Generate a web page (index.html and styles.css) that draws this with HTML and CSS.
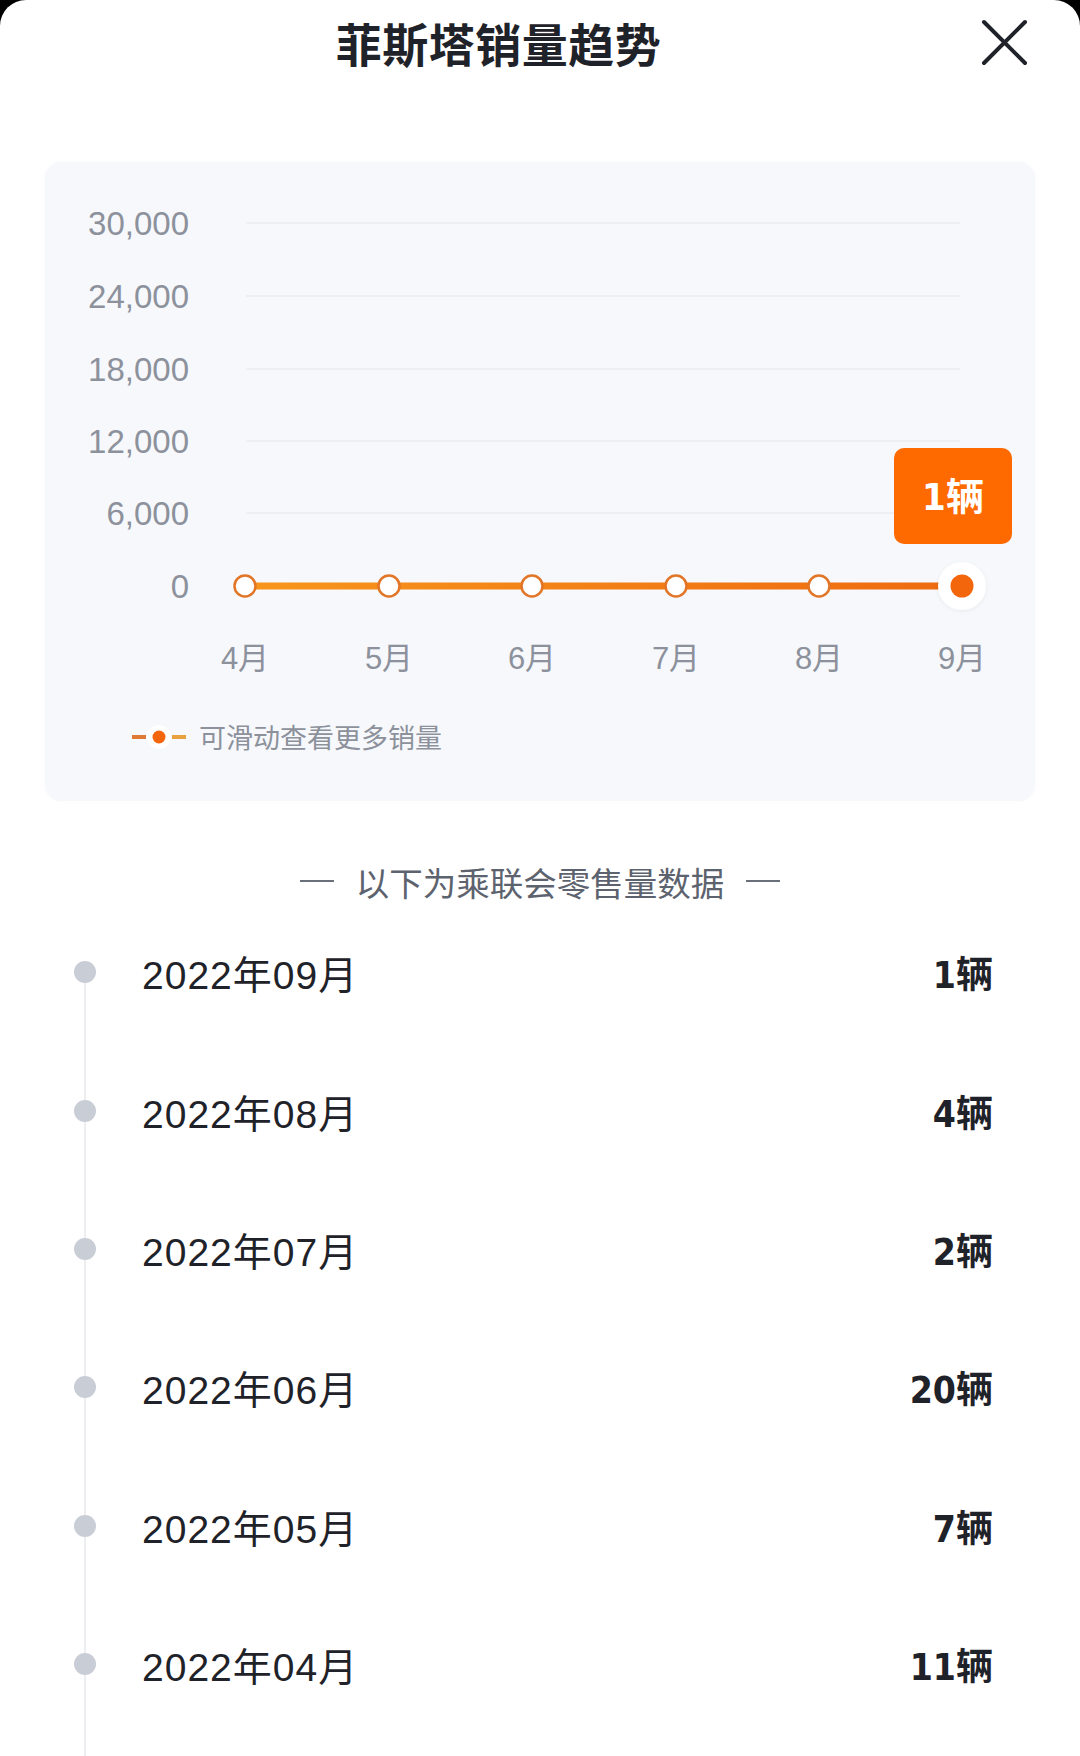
FILE: index.html
```html
<!DOCTYPE html>
<html lang="zh-CN">
<head>
<meta charset="utf-8">
<title>菲斯塔销量趋势</title>
<link rel="stylesheet" href="styles.css">
</head>
<body>
<div class="sheet">
  <header class="header">
    <h1 class="title">菲斯塔销量趋势</h1>
    <button class="close" aria-label="关闭">
      <svg width="47" height="47" viewBox="0 0 47 47"><path d="M3 3 L44 44 M44 3 L3 44" stroke="#1f2329" stroke-width="4" stroke-linecap="round" fill="none"/></svg>
    </button>
  </header>

  <section class="card">
    <svg class="chart" width="990" height="530" viewBox="0 0 990 530">
      <defs>
        <linearGradient id="lg" gradientUnits="userSpaceOnUse" x1="200" y1="0" x2="917" y2="0">
          <stop offset="0" stop-color="#f7961c"/>
          <stop offset="1" stop-color="#ee6a10"/>
        </linearGradient>
        <filter id="halo" x="-50%" y="-50%" width="200%" height="200%">
          <feDropShadow dx="0" dy="1" stdDeviation="2" flood-color="#000" flood-opacity="0.06"/>
        </filter>
      </defs>
      <g class="grid" stroke="#eaecf0" stroke-width="1.5">
        <line x1="201" y1="61" x2="915" y2="61"/>
        <line x1="201" y1="134" x2="915" y2="134"/>
        <line x1="201" y1="207" x2="915" y2="207"/>
        <line x1="201" y1="279" x2="915" y2="279"/>
        <line x1="201" y1="351" x2="915" y2="351"/>
      </g>
      <g class="ylab" text-anchor="end">
        <text x="144" y="73">30,000</text>
        <text x="144" y="146">24,000</text>
        <text x="144" y="219">18,000</text>
        <text x="144" y="291">12,000</text>
        <text x="144" y="363">6,000</text>
        <text x="144" y="436">0</text>
      </g>
      <rect x="200" y="420.5" width="717" height="7" fill="url(#lg)"/>
      <g fill="#fff" stroke="#e27526" stroke-width="2.5">
        <circle cx="200" cy="424" r="10.5"/>
        <circle cx="344" cy="424" r="10.5"/>
        <circle cx="487" cy="424" r="10.5"/>
        <circle cx="631" cy="424" r="10.5"/>
        <circle cx="774" cy="424" r="10.5"/>
      </g>
      <circle cx="917" cy="424" r="24" fill="#fff" filter="url(#halo)"/>
      <circle cx="917" cy="424" r="11.5" fill="#f3660c"/>
      <g class="xlab" text-anchor="middle">
        <text x="200" y="507">4月</text>
        <text x="344" y="507">5月</text>
        <text x="487" y="507">6月</text>
        <text x="631" y="507">7月</text>
        <text x="774" y="507">8月</text>
        <text x="917" y="507">9月</text>
      </g>
      <rect x="849" y="286" width="118" height="96" rx="10" fill="#ff6a00"/>
      <text class="tip" x="908" y="348" text-anchor="middle">1辆</text>
    </svg>
    <div class="legend">
      <svg width="54" height="30" viewBox="0 0 54 30">
        <line x1="0" y1="15" x2="14" y2="15" stroke="#de7a35" stroke-width="4"/>
        <line x1="40" y1="15" x2="54" y2="15" stroke="#e9a13f" stroke-width="4"/>
        <circle cx="27" cy="15" r="12" fill="#fff"/>
        <circle cx="27" cy="15" r="6.5" fill="#f3660c"/>
      </svg>
      <span class="legend-text">可滑动查看更多销量</span>
    </div>
  </section>

  <div class="divider"><span class="dash"></span><span>以下为乘联会零售量数据</span><span class="dash"></span></div>

  <ul class="timeline">
    <li class="row"><span class="dot"></span><span class="date">2022年09月</span><span class="val">1辆</span></li>
    <li class="row"><span class="dot"></span><span class="date">2022年08月</span><span class="val">4辆</span></li>
    <li class="row"><span class="dot"></span><span class="date">2022年07月</span><span class="val">2辆</span></li>
    <li class="row"><span class="dot"></span><span class="date">2022年06月</span><span class="val">20辆</span></li>
    <li class="row"><span class="dot"></span><span class="date">2022年05月</span><span class="val">7辆</span></li>
    <li class="row"><span class="dot"></span><span class="date">2022年04月</span><span class="val">11辆</span></li>
  </ul>
</div>
</body>
</html>
```

FILE: styles.css
```css
* { box-sizing: border-box; }
html, body { margin: 0; padding: 0; }
body {
  background: #000;
  width: 1080px;
  height: 1756px;
  overflow: hidden;
  font-family: "Liberation Sans", "Noto Sans CJK SC", sans-serif;
}
.sheet {
  background: #fff;
  border-radius: 26px 26px 0 0;
  height: 1756px;
  overflow: hidden;
}
.header {
  display: flex;
  align-items: center;
  height: 84px;
  padding: 0 52px 0 16px;
}
.title {
  flex: 1;
  margin: 0;
  text-align: center;
  font-family: "Noto Sans CJK SC", sans-serif;
  font-weight: 700;
  font-size: 46px;
  line-height: 84px;
  color: #1f2329;
  letter-spacing: 0.5px;
}
.close {
  width: 47px;
  height: 47px;
  padding: 0;
  border: 0;
  background: none;
  display: flex;
}
.card {
  margin: 78px 45px 0;
  background: #f6f8fb;
  border-radius: 16px;
  box-shadow: 0 0 6px rgba(0, 0, 0, 0.02);
  padding-bottom: 44px;
}
.chart { display: block; }
.ylab text {
  font-family: "Liberation Sans", sans-serif;
  font-size: 33px;
  fill: #8c919b;
}
.xlab text {
  font-family: "Liberation Sans", "Noto Sans CJK SC", sans-serif;
  font-size: 31px;
  fill: #8c919b;
}
.tip {
  font-family: "DejaVu Sans Condensed", "Noto Sans CJK SC", sans-serif;
  font-weight: 700;
  font-size: 38px;
  fill: #fff;
}
.legend {
  display: flex;
  align-items: center;
  gap: 13px;
  margin: 25px 0 0 87px;
  height: 40px;
}
.legend-text {
  font-family: "Noto Sans CJK SC", sans-serif;
  font-size: 27px;
  color: #8c919b;
  line-height: 40px;
}
.divider {
  display: flex;
  justify-content: center;
  align-items: center;
  gap: 22px;
  margin-top: 58px;
  height: 44px;
  font-family: "Noto Sans CJK SC", sans-serif;
  font-size: 33.5px;
  color: #5d636e;
}
.dash {
  display: block;
  width: 34px;
  height: 2px;
  background: #6a707a;
}
.timeline {
  list-style: none;
  margin: 0;
  padding: 0;
  position: relative;
}
.timeline::before {
  content: "";
  position: absolute;
  left: 84px;
  top: 69px;
  bottom: -200px;
  width: 2px;
  background: #eceef2;
}
.row {
  display: flex;
  align-items: center;
  height: 138.4px;
  padding: 0 87px 0 74px;
  position: relative;
}
.dot {
  width: 22px;
  height: 22px;
  border-radius: 50%;
  background: #c9cdd6;
  flex: none;
}
.date {
  margin-left: 46px;
  flex: 1;
  font-family: "Liberation Sans", "Noto Sans CJK SC", sans-serif;
  font-size: 39px;
  letter-spacing: 1px;
  color: #1f2329;
}
.val {
  font-family: "DejaVu Sans Condensed", "Noto Sans CJK SC", sans-serif;
  font-weight: 700;
  font-size: 37px;
  color: #1f2329;
}
```
